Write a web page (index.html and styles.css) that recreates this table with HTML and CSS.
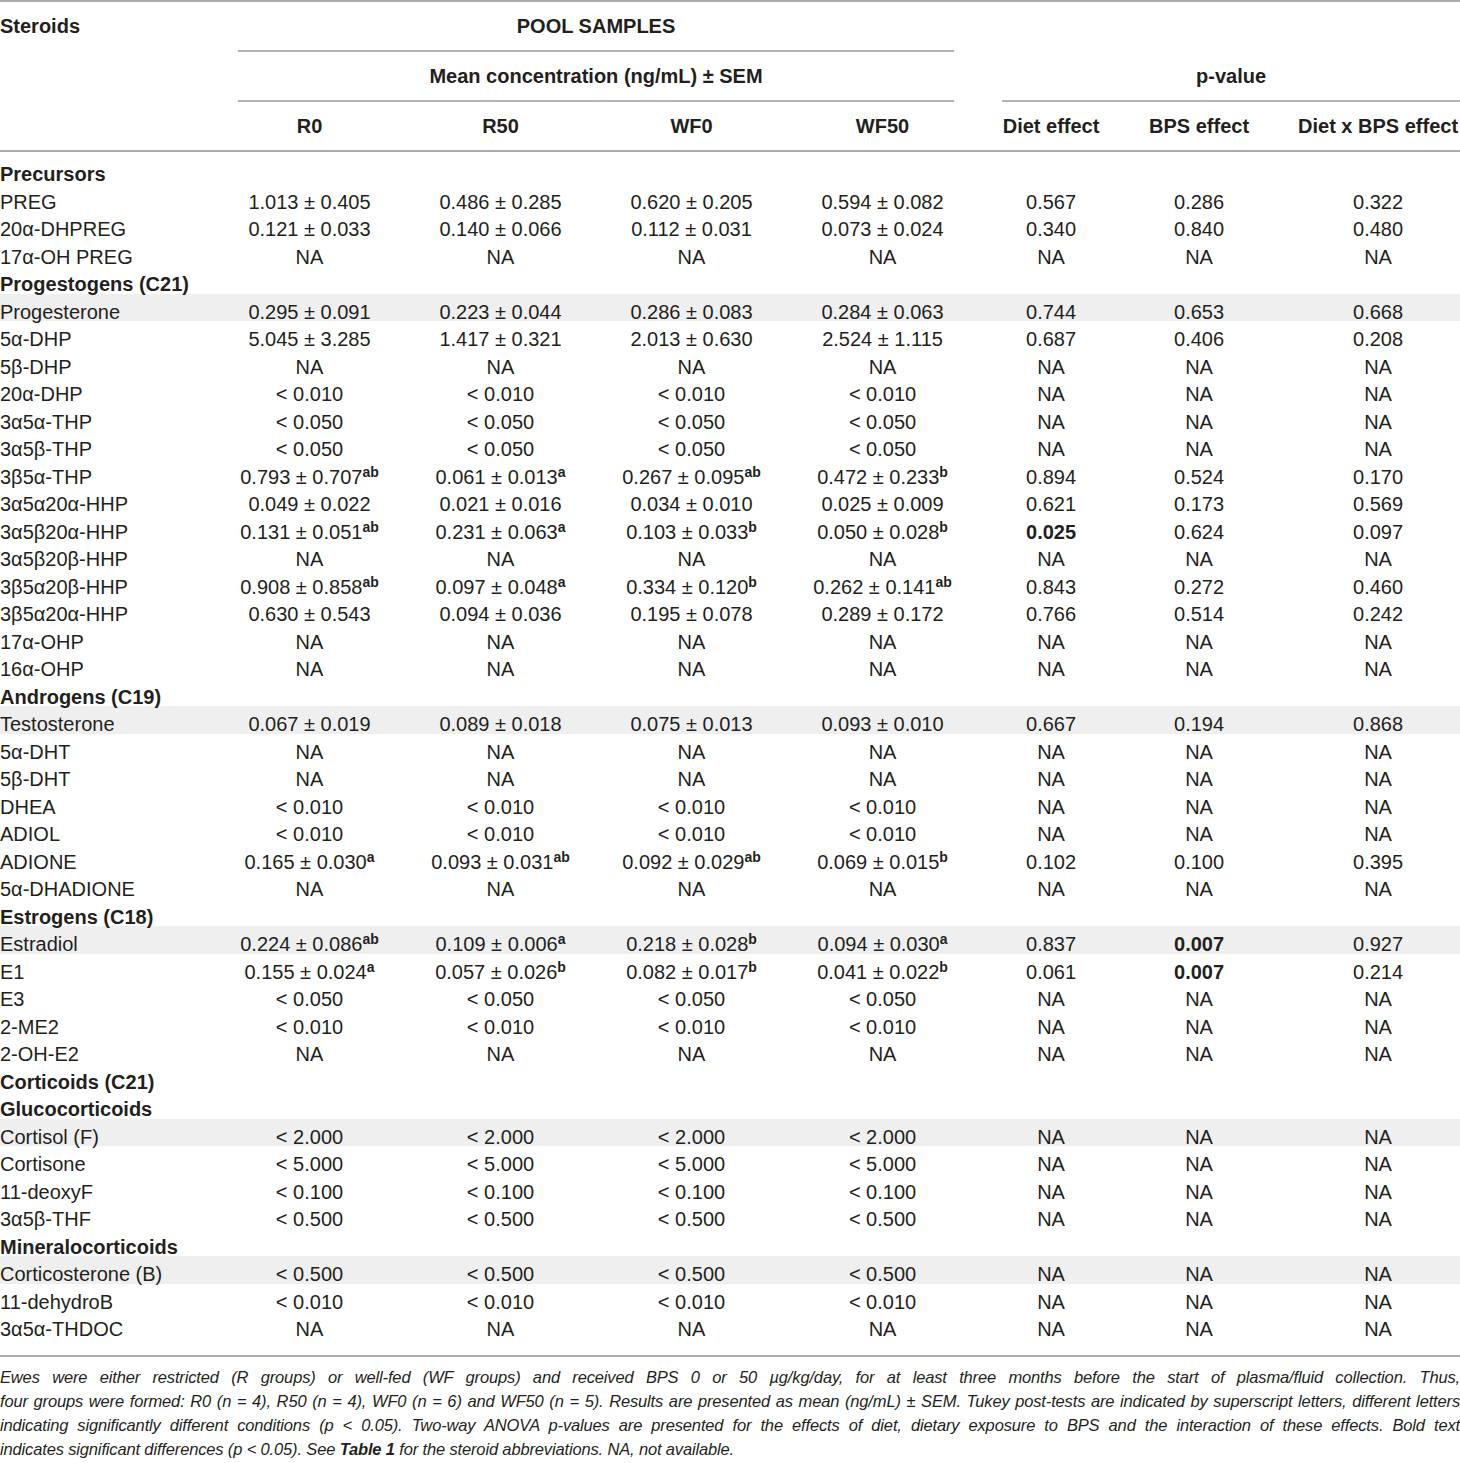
FILE: index.html
```html
<!DOCTYPE html>
<html lang="en">
<head>
    <meta charset="UTF-8">
    <meta name="viewport" content="width=device-width, initial-scale=1.0">
    <title>Steroid concentrations in pool samples</title>
    <link rel="stylesheet" href="styles.css">
</head>
<body>
    <table class="data">
        <colgroup>
            <col class="c-name">
            <col class="c-val"><col class="c-val"><col class="c-val"><col class="c-val">
            <col class="c-diet"><col class="c-bps"><col class="c-inter">
        </colgroup>
        <thead>
            <tr>
                <th rowspan="3" class="steroids"><div class="hd">Steroids</div></th>
                <th colspan="4"><div class="hd rule">POOL SAMPLES</div></th>
                <th colspan="3"><div class="hd"></div></th>
            </tr>
            <tr>
                <th colspan="4"><div class="hd rule">Mean concentration (ng/mL) ± SEM</div></th>
                <th colspan="3"><div class="hd rule pv">p-value</div></th>
            </tr>
            <tr class="cols">
                <th><div class="hd">R0</div></th>
                <th><div class="hd">R50</div></th>
                <th><div class="hd">WF0</div></th>
                <th><div class="hd">WF50</div></th>
                <th><div class="hd">Diet effect</div></th>
                <th><div class="hd">BPS effect</div></th>
                <th class="last"><div class="hd">Diet x BPS effect</div></th>
            </tr>
        </thead>
        <tbody>
            <tr class="group first"><td colspan="8">Precursors</td></tr>
            <tr><td>PREG</td><td>1.013 ± 0.405</td><td>0.486 ± 0.285</td><td>0.620 ± 0.205</td><td>0.594 ± 0.082</td><td>0.567</td><td>0.286</td><td class="last">0.322</td></tr>
            <tr><td>20α-DHPREG</td><td>0.121 ± 0.033</td><td>0.140 ± 0.066</td><td>0.112 ± 0.031</td><td>0.073 ± 0.024</td><td>0.340</td><td>0.840</td><td class="last">0.480</td></tr>
            <tr><td>17α-OH PREG</td><td>NA</td><td>NA</td><td>NA</td><td>NA</td><td>NA</td><td>NA</td><td class="last">NA</td></tr>

            <tr class="group"><td colspan="8">Progestogens (C21)</td></tr>
            <tr class="shade"><td>Progesterone</td><td>0.295 ± 0.091</td><td>0.223 ± 0.044</td><td>0.286 ± 0.083</td><td>0.284 ± 0.063</td><td>0.744</td><td>0.653</td><td class="last">0.668</td></tr>
            <tr><td>5α-DHP</td><td>5.045 ± 3.285</td><td>1.417 ± 0.321</td><td>2.013 ± 0.630</td><td>2.524 ± 1.115</td><td>0.687</td><td>0.406</td><td class="last">0.208</td></tr>
            <tr><td>5β-DHP</td><td>NA</td><td>NA</td><td>NA</td><td>NA</td><td>NA</td><td>NA</td><td class="last">NA</td></tr>
            <tr><td>20α-DHP</td><td>&lt; 0.010</td><td>&lt; 0.010</td><td>&lt; 0.010</td><td>&lt; 0.010</td><td>NA</td><td>NA</td><td class="last">NA</td></tr>
            <tr><td>3α5α-THP</td><td>&lt; 0.050</td><td>&lt; 0.050</td><td>&lt; 0.050</td><td>&lt; 0.050</td><td>NA</td><td>NA</td><td class="last">NA</td></tr>
            <tr><td>3α5β-THP</td><td>&lt; 0.050</td><td>&lt; 0.050</td><td>&lt; 0.050</td><td>&lt; 0.050</td><td>NA</td><td>NA</td><td class="last">NA</td></tr>
            <tr><td>3β5α-THP</td><td>0.793 ± 0.707<sup>ab</sup></td><td>0.061 ± 0.013<sup>a</sup></td><td>0.267 ± 0.095<sup>ab</sup></td><td>0.472 ± 0.233<sup>b</sup></td><td>0.894</td><td>0.524</td><td class="last">0.170</td></tr>
            <tr><td>3α5α20α-HHP</td><td>0.049 ± 0.022</td><td>0.021 ± 0.016</td><td>0.034 ± 0.010</td><td>0.025 ± 0.009</td><td>0.621</td><td>0.173</td><td class="last">0.569</td></tr>
            <tr><td>3α5β20α-HHP</td><td>0.131 ± 0.051<sup>ab</sup></td><td>0.231 ± 0.063<sup>a</sup></td><td>0.103 ± 0.033<sup>b</sup></td><td>0.050 ± 0.028<sup>b</sup></td><td><b>0.025</b></td><td>0.624</td><td class="last">0.097</td></tr>
            <tr><td>3α5β20β-HHP</td><td>NA</td><td>NA</td><td>NA</td><td>NA</td><td>NA</td><td>NA</td><td class="last">NA</td></tr>
            <tr><td>3β5α20β-HHP</td><td>0.908 ± 0.858<sup>ab</sup></td><td>0.097 ± 0.048<sup>a</sup></td><td>0.334 ± 0.120<sup>b</sup></td><td>0.262 ± 0.141<sup>ab</sup></td><td>0.843</td><td>0.272</td><td class="last">0.460</td></tr>
            <tr><td>3β5α20α-HHP</td><td>0.630 ± 0.543</td><td>0.094 ± 0.036</td><td>0.195 ± 0.078</td><td>0.289 ± 0.172</td><td>0.766</td><td>0.514</td><td class="last">0.242</td></tr>
            <tr><td>17α-OHP</td><td>NA</td><td>NA</td><td>NA</td><td>NA</td><td>NA</td><td>NA</td><td class="last">NA</td></tr>
            <tr><td>16α-OHP</td><td>NA</td><td>NA</td><td>NA</td><td>NA</td><td>NA</td><td>NA</td><td class="last">NA</td></tr>

            <tr class="group"><td colspan="8">Androgens (C19)</td></tr>
            <tr class="shade"><td>Testosterone</td><td>0.067 ± 0.019</td><td>0.089 ± 0.018</td><td>0.075 ± 0.013</td><td>0.093 ± 0.010</td><td>0.667</td><td>0.194</td><td class="last">0.868</td></tr>
            <tr><td>5α-DHT</td><td>NA</td><td>NA</td><td>NA</td><td>NA</td><td>NA</td><td>NA</td><td class="last">NA</td></tr>
            <tr><td>5β-DHT</td><td>NA</td><td>NA</td><td>NA</td><td>NA</td><td>NA</td><td>NA</td><td class="last">NA</td></tr>
            <tr><td>DHEA</td><td>&lt; 0.010</td><td>&lt; 0.010</td><td>&lt; 0.010</td><td>&lt; 0.010</td><td>NA</td><td>NA</td><td class="last">NA</td></tr>
            <tr><td>ADIOL</td><td>&lt; 0.010</td><td>&lt; 0.010</td><td>&lt; 0.010</td><td>&lt; 0.010</td><td>NA</td><td>NA</td><td class="last">NA</td></tr>
            <tr><td>ADIONE</td><td>0.165 ± 0.030<sup>a</sup></td><td>0.093 ± 0.031<sup>ab</sup></td><td>0.092 ± 0.029<sup>ab</sup></td><td>0.069 ± 0.015<sup>b</sup></td><td>0.102</td><td>0.100</td><td class="last">0.395</td></tr>
            <tr><td>5α-DHADIONE</td><td>NA</td><td>NA</td><td>NA</td><td>NA</td><td>NA</td><td>NA</td><td class="last">NA</td></tr>

            <tr class="group"><td colspan="8">Estrogens (C18)</td></tr>
            <tr class="shade"><td>Estradiol</td><td>0.224 ± 0.086<sup>ab</sup></td><td>0.109 ± 0.006<sup>a</sup></td><td>0.218 ± 0.028<sup>b</sup></td><td>0.094 ± 0.030<sup>a</sup></td><td>0.837</td><td><b>0.007</b></td><td class="last">0.927</td></tr>
            <tr><td>E1</td><td>0.155 ± 0.024<sup>a</sup></td><td>0.057 ± 0.026<sup>b</sup></td><td>0.082 ± 0.017<sup>b</sup></td><td>0.041 ± 0.022<sup>b</sup></td><td>0.061</td><td><b>0.007</b></td><td class="last">0.214</td></tr>
            <tr><td>E3</td><td>&lt; 0.050</td><td>&lt; 0.050</td><td>&lt; 0.050</td><td>&lt; 0.050</td><td>NA</td><td>NA</td><td class="last">NA</td></tr>
            <tr><td>2-ME2</td><td>&lt; 0.010</td><td>&lt; 0.010</td><td>&lt; 0.010</td><td>&lt; 0.010</td><td>NA</td><td>NA</td><td class="last">NA</td></tr>
            <tr><td>2-OH-E2</td><td>NA</td><td>NA</td><td>NA</td><td>NA</td><td>NA</td><td>NA</td><td class="last">NA</td></tr>

            <tr class="group"><td colspan="8">Corticoids (C21)</td></tr>
            <tr class="group"><td colspan="8">Glucocorticoids</td></tr>
            <tr class="shade"><td>Cortisol (F)</td><td>&lt; 2.000</td><td>&lt; 2.000</td><td>&lt; 2.000</td><td>&lt; 2.000</td><td>NA</td><td>NA</td><td class="last">NA</td></tr>
            <tr><td>Cortisone</td><td>&lt; 5.000</td><td>&lt; 5.000</td><td>&lt; 5.000</td><td>&lt; 5.000</td><td>NA</td><td>NA</td><td class="last">NA</td></tr>
            <tr><td>11-deoxyF</td><td>&lt; 0.100</td><td>&lt; 0.100</td><td>&lt; 0.100</td><td>&lt; 0.100</td><td>NA</td><td>NA</td><td class="last">NA</td></tr>
            <tr><td>3α5β-THF</td><td>&lt; 0.500</td><td>&lt; 0.500</td><td>&lt; 0.500</td><td>&lt; 0.500</td><td>NA</td><td>NA</td><td class="last">NA</td></tr>
            <tr class="group"><td colspan="8">Mineralocorticoids</td></tr>
            <tr class="shade"><td>Corticosterone (B)</td><td>&lt; 0.500</td><td>&lt; 0.500</td><td>&lt; 0.500</td><td>&lt; 0.500</td><td>NA</td><td>NA</td><td class="last">NA</td></tr>
            <tr><td>11-dehydroB</td><td>&lt; 0.010</td><td>&lt; 0.010</td><td>&lt; 0.010</td><td>&lt; 0.010</td><td>NA</td><td>NA</td><td class="last">NA</td></tr>
            <tr class="end"><td>3α5α-THDOC</td><td>NA</td><td>NA</td><td>NA</td><td>NA</td><td>NA</td><td>NA</td><td class="last">NA</td></tr>
        </tbody>
    </table>

    <!-- legend under the table, one block per printed line -->
    <p class="note">
        <span class="line">Ewes were either restricted (R groups) or well-fed (WF groups) and received BPS 0 or 50 µg/kg/day, for at least three months before the start of plasma/fluid collection. Thus,</span>
        <span class="line">four groups were formed: R0 (n = 4), R50 (n = 4), WF0 (n = 6) and WF50 (n = 5). Results are presented as mean (ng/mL) ± SEM. Tukey post-tests are indicated by superscript letters, different letters</span>
        <span class="line">indicating significantly different conditions (p &lt; 0.05). Two-way ANOVA p-values are presented for the effects of diet, dietary exposure to BPS and the interaction of these effects. Bold text</span>
        <span class="line final">indicates significant differences (p &lt; 0.05). See <b>Table 1</b> for the steroid abbreviations. NA, not available.</span>
    </p>
</body>
</html>
```

FILE: styles.css
```css
body {
    margin: 0;
    background-color: #fff;
    color: #231f20;
    font-family: "Liberation Sans", Arial, sans-serif;
}
.data {
    width: 1460px;
    table-layout: fixed;
    border-collapse: collapse;
    border-top: 2px solid #ababab;
    border-bottom: 2px solid #ababab;
    font-size: 20px;
}
.c-name { width: 214px; }
.c-val { width: 191px; }
.c-diet { width: 146px; }
.c-bps { width: 150px; }
.c-inter { width: 186px; }

/* header */
.data th {
    padding: 0;
    font-weight: bold;
    text-align: center;
    vertical-align: top;
}
.data th.steroids {
    text-align: left;
    border-bottom: 2px solid #ababab;
}
.hd {
    height: 48px;
    line-height: 48px;
    border-bottom: 2px solid transparent;
    white-space: nowrap;
}
.hd.rule {
    margin: 0 24px;
    border-bottom-color: #b5b5b5;
}
.hd.pv {
    margin-right: 0;
}
.cols th {
    border-bottom: 2px solid #ababab;
}
.cols .hd {
    border-bottom: none;
}

/* body */
.data td {
    padding: 10px 0 0;
    line-height: 17.5px;
    text-align: center;
    white-space: nowrap;
}
.data td:first-child {
    text-align: left;
}
.data td.last,
.data th.last {
    padding-left: 22px;
}
.data tr.group td {
    font-weight: bold;
    text-align: left;
}
.data tr.first td {
    padding-top: 14px;
}
.data tr.end td {
    padding-bottom: 16px;
}
.shade {
    background-color: #efefef;
}
sup {
    font-size: 14px;
    font-weight: bold;
    line-height: 0;
    vertical-align: 7px;
}

/* legend */
.note {
    margin: 8px 0 0;
    font-size: 16.5px;
    letter-spacing: -0.15px;
    font-style: italic;
    line-height: 24px;
}
.note .line {
    display: block;
    white-space: nowrap;
    text-align: justify;
    text-align-last: justify;
}
.note .line.final {
    text-align-last: left;
}
```
